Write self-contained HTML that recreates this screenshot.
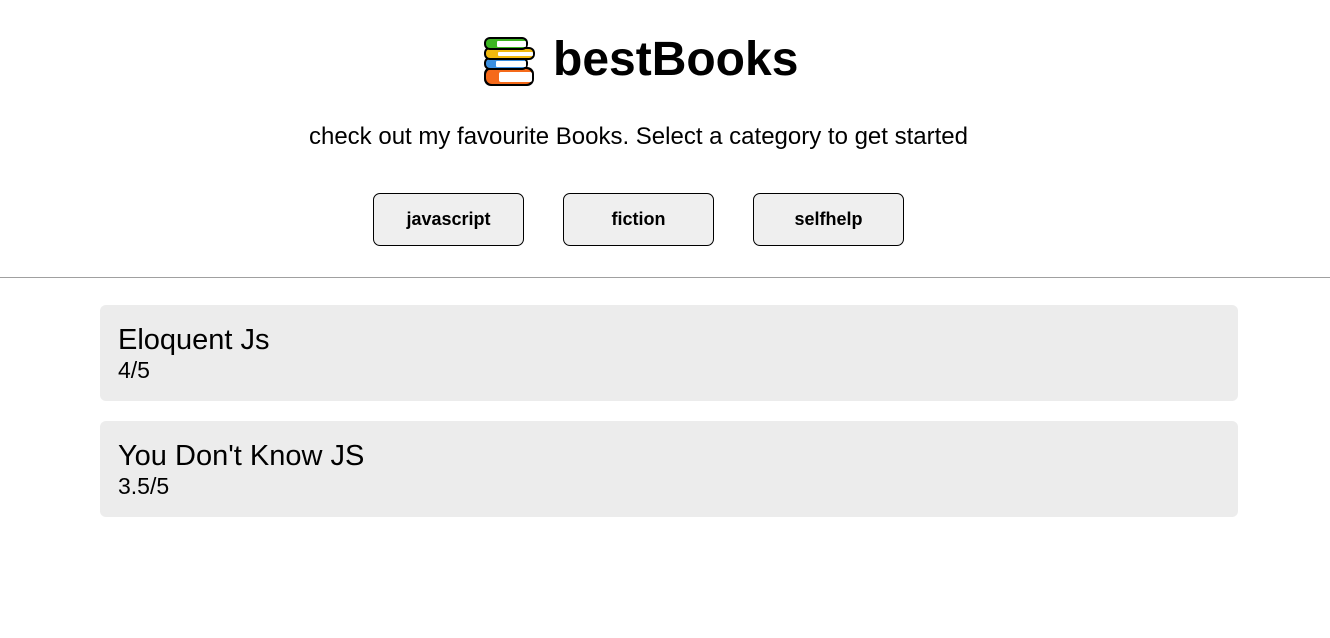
<!DOCTYPE html>
<html><head><meta charset="utf-8"><style>
html,body{margin:0;padding:0;background:#fff;font-family:"Liberation Sans",Arial,sans-serif;color:#000;width:1330px;height:638px;overflow:hidden}
.logo{position:absolute;left:483px;top:36px}
.title{position:absolute;left:553px;top:32px;font-size:48px;font-weight:bold;line-height:56px;margin:0}
.sub{position:absolute;left:0;width:1277px;text-align:center;top:122px;font-size:24px;line-height:30px}
.btn{position:absolute;top:193px;width:151px;height:53px;box-sizing:border-box;border:1px solid #000;border-radius:7px;background:#efefef;font-weight:bold;font-size:18px;text-align:center;line-height:51px}
hr{position:absolute;top:277px;left:0;width:1330px;margin:0;border:0;border-top:1px solid #a0a0a0}
.card{position:absolute;left:100px;width:1138px;height:96px;background:#ececec;border-radius:6px;box-sizing:border-box;padding:18px 18px}
.card .n{font-size:29px;line-height:34px}
.card .r{font-size:23px;line-height:26px}
</style></head><body>
<svg class="logo" width="52" height="51" viewBox="0 0 52 51">
<rect x="1" y="31" width="50" height="19" rx="7" fill="#000"/>
<rect x="3" y="33" width="46" height="15" rx="6" fill="#f56a1a"/>
<rect x="16" y="36" width="33" height="10" rx="2" fill="#fff"/>
<rect x="1" y="21" width="44" height="13" rx="6" fill="#000"/>
<rect x="3" y="23" width="40" height="9" rx="4" fill="#3b8fe0"/>
<rect x="13" y="25" width="30" height="6" rx="1" fill="#fff"/>
<rect x="1" y="11" width="51" height="13" rx="6" fill="#000"/>
<rect x="3" y="13" width="47" height="9" rx="4" fill="#f2b90f"/>
<rect x="15" y="16" width="35" height="4" rx="1" fill="#fff"/>
<rect x="1" y="1" width="44" height="13" rx="6" fill="#000"/>
<rect x="3" y="3" width="40" height="9" rx="4" fill="#3cb521"/>
<rect x="14" y="5" width="29" height="6" rx="1" fill="#fff"/>
</svg>
<h1 class="title">bestBooks</h1>
<div class="sub">check out my favourite Books. Select a category to get started</div>
<div class="btn" style="left:373px">javascript</div>
<div class="btn" style="left:563px">fiction</div>
<div class="btn" style="left:753px">selfhelp</div>
<hr>
<div class="card" style="top:305px"><div class="n">Eloquent Js</div><div class="r">4/5</div></div>
<div class="card" style="top:421px"><div class="n">You Don't Know JS</div><div class="r">3.5/5</div></div>
</body></html>
